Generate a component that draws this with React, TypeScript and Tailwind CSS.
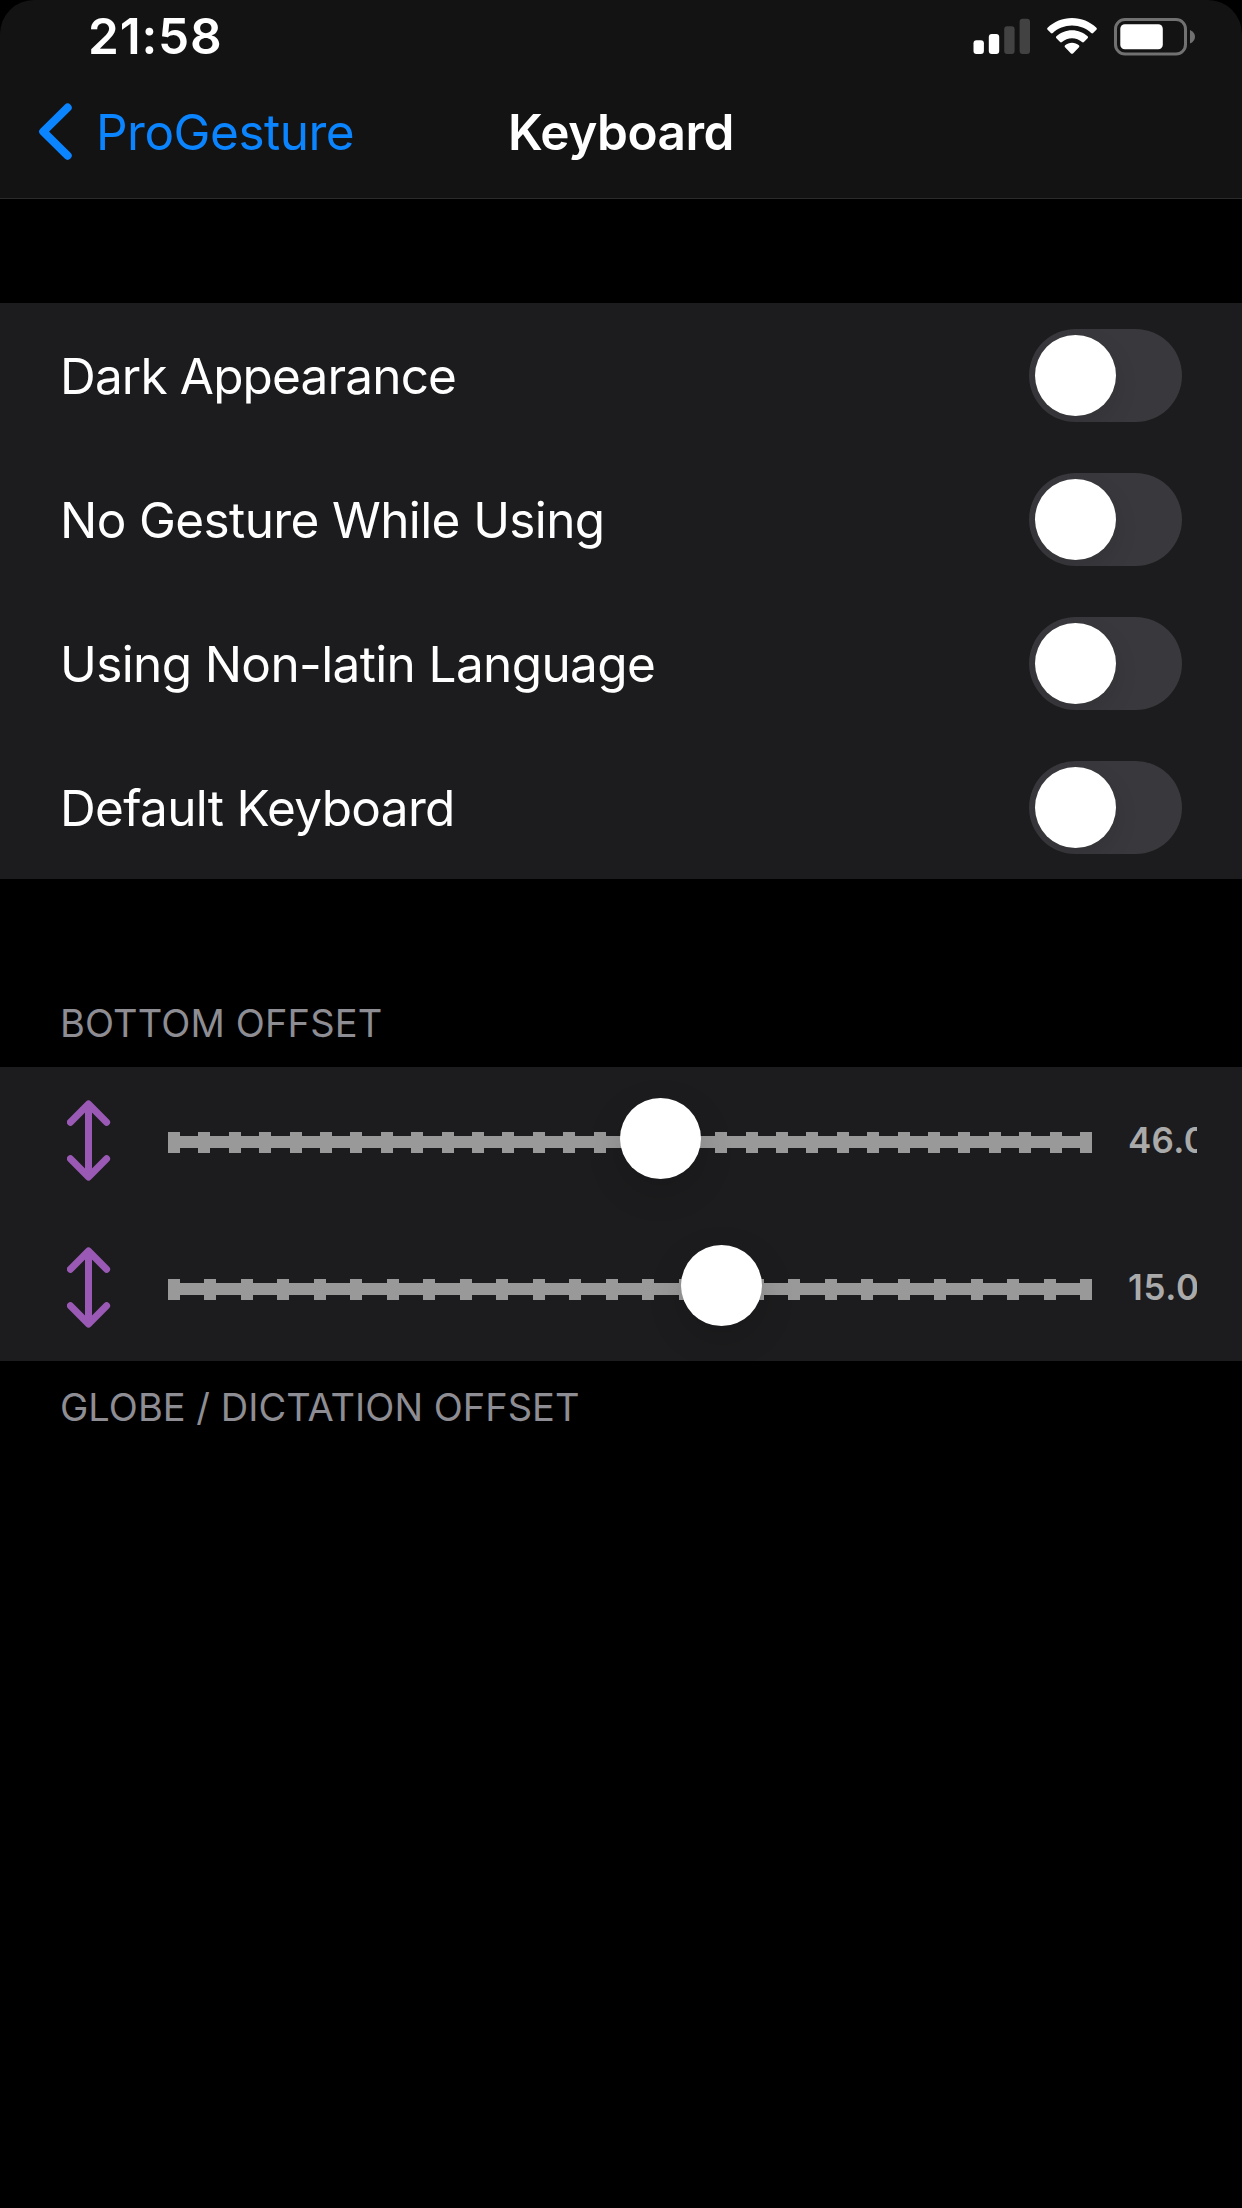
import { useState } from "react";

function SignalIcon() {
  return (
    <svg width="57" height="36" viewBox="0 0 57 36" className="block">
      <rect x="0.5" y="22.2" width="10.4" height="13.8" rx="3" fill="#fff" />
      <rect x="15.8" y="16" width="10.4" height="20" rx="3" fill="#fff" />
      <rect x="31.2" y="8.2" width="10.4" height="27.8" rx="3" fill="#424242" />
      <rect x="46.6" y="0.8" width="10.4" height="35.2" rx="3" fill="#424242" />
    </svg>
  );
}

function WifiIcon() {
  return (
    <svg width="50" height="36" viewBox="0 0 50 36" className="block" fill="#fff">
      <path d="M25 0C15.6 0 7 3.7.6 9.7c-.6.6-.6 1.4 0 2l3.3 3.4c.5.5 1.3.5 1.9 0C10.8 10.4 17.6 7.6 25 7.6s14.2 2.8 19.2 7.5c.6.5 1.4.5 1.9 0l3.3-3.4c.6-.6.6-1.4 0-2C43 3.7 34.4 0 25 0Z" />
      <path d="M25 12.2c-6 0-11.5 2.3-15.6 6.1-.6.6-.6 1.4 0 2l3.7 3.8c.5.5 1.3.5 1.9 0 2.7-2.4 6.2-3.8 10-3.8s7.3 1.4 10 3.8c.6.5 1.4.5 1.9 0l3.7-3.8c.6-.6.6-1.4 0-2C36.5 14.5 31 12.2 25 12.2Z" />
      <path d="M25 24.8c-2.6 0-5 .9-6.9 2.5-.6.5-.6 1.4-.1 2l6 6.1c.6.6 1.4.6 2 0l6-6.1c.5-.6.5-1.5-.1-2-1.9-1.6-4.3-2.5-6.9-2.5Z" />
    </svg>
  );
}

function BatteryIcon() {
  return (
    <svg width="82" height="38" viewBox="0 0 82 38" className="block">
      <rect x="1.5" y="1.5" width="70" height="34.5" rx="9.5" fill="none" stroke="#717171" strokeWidth="3" />
      <rect x="6.3" y="6.2" width="42.5" height="25" rx="4.5" fill="#fff" />
      <path d="M76 12c3 1.2 5 3.7 5 6.8s-2 5.6-5 6.8Z" fill="#717171" />
    </svg>
  );
}

function BackChevron() {
  return (
    <svg width="34" height="58" viewBox="0 0 34 58" className="block">
      <path
        d="M28.6 4.7 L4.3 28.6 L28.6 52.6"
        fill="none"
        stroke="#0a84ff"
        strokeWidth="8.2"
        strokeLinecap="round"
        strokeLinejoin="round"
      />
    </svg>
  );
}

function VerticalArrow() {
  return (
    <svg width="44" height="81" viewBox="0 0 44 81" className="block shrink-0">
      <path
        d="M3.4 22.2 L21.5 4 L39.6 22.2 M21.5 5 V76 M3.4 58.8 L21.5 77 L39.6 58.8"
        fill="none"
        stroke="#9b59b6"
        strokeWidth="7"
        strokeLinecap="round"
        strokeLinejoin="round"
      />
    </svg>
  );
}

function Toggle() {
  const [on, setOn] = useState(false);
  return (
    <button
      role="switch"
      aria-checked={on}
      onClick={() => setOn(!on)}
      className={
        on
          ? "mt-px flex h-[93px] w-[153px] items-center justify-end overflow-hidden rounded-full bg-[#30d158] p-[6px]"
          : "mt-px flex h-[93px] w-[153px] items-center overflow-hidden rounded-full bg-[#39393d] p-[6px]"
      }
    >
      <span className="size-[81px] rounded-full bg-white shadow-[0_9px_24px_rgba(0,0,0,0.1)]" />
    </button>
  );
}

const toggles = [
  { label: "Dark Appearance", style: "tracking-[-0.84px]" },
  { label: "No Gesture While Using", style: "tracking-[-0.62px]" },
  { label: "Using Non-latin Language", style: "tracking-[-0.63px]" },
  { label: "Default Keyboard", style: "tracking-[-0.69px]" },
];

const TRACK_WIDTH = 924;
const TICK_WIDTH = 12;

function StepSlider({ steps, knob }: { steps: number; knob: number }) {
  const gap = (TRACK_WIDTH - TICK_WIDTH) / steps;
  return (
    <div className="relative mt-1 ml-[57px] flex h-[21px] w-[924px] shrink-0 items-center">
      <div className="mb-px h-3 w-full bg-[#999999]" />
      {Array.from({ length: steps + 1 }, (_, i) => (
        <span
          key={i}
          className="absolute top-0 h-full w-3 bg-[#999999]"
          style={{ left: Math.round(i * gap) }}
        />
      ))}
      <span
        className="absolute top-[-34px] size-[81px] rounded-full bg-white shadow-[0_12px_36px_rgba(0,0,0,0.14)]"
        style={{ left: knob }}
      />
    </div>
  );
}

const sliders = [
  { steps: 30, knob: 452, value: "46.000", style: "tracking-[0.3px]" },
  { steps: 25, knob: 513, value: "15.000", style: "tracking-[0.6px]" },
];

export default function App() {
  return (
    <div className="flex h-[2208px] w-[1242px] flex-col bg-black font-[Inter,'Liberation_Sans',sans-serif] text-white">
      <header className="h-[199px] rounded-t-[34px] border-b border-[#2b2b2b] bg-[#131313]">
        <div className="flex h-[66px] items-start justify-between pl-[88px]">
          <span className="text-[49.5px] leading-[72px] font-semibold tracking-[0.83px]">21:58</span>
          <div className="flex items-start pt-[18px] pr-[46px]">
            <SignalIcon />
            <div className="ml-[17px]">
              <WifiIcon />
            </div>
            <div className="ml-[17px]">
              <BatteryIcon />
            </div>
          </div>
        </div>
        <div className="grid h-[132px] grid-cols-[1fr_auto_1fr] items-center text-[49.5px] leading-[60px]">
          <button className="flex items-center pl-[39px] text-[#0a84ff]">
            <BackChevron />
            <span className="ml-[23px] tracking-[-0.5px]">ProGesture</span>
          </button>
          <h1 className="font-semibold tracking-[-0.47px]">Keyboard</h1>
        </div>
      </header>

      <section className="mt-[104px] bg-[#1c1c1e]">
        {toggles.map((t) => (
          <div key={t.label} className="flex h-36 items-center justify-between px-[60px]">
            <span className={`pt-[2px] text-[49.5px] leading-[60px] ${t.style}`}>{t.label}</span>
            <Toggle />
          </div>
        ))}
      </section>

      <h2 className="mt-[120px] h-[68px] pl-[60px] text-[38px] leading-[48px] tracking-[0.15px] text-[#8d8d93]">
        BOTTOM OFFSET
      </h2>
      <section className="bg-[#1c1c1e]">
        {sliders.map((s) => (
          <div key={s.steps} className="flex h-[147px] items-center pl-[67px]">
            <VerticalArrow />
            <StepSlider steps={s.steps} knob={s.knob} />
            <div className="mb-[2px] ml-[36px] w-[69px] overflow-hidden">
              <span className={`block text-[35px] leading-[48px] font-semibold whitespace-nowrap text-[#aaaaaa] ${s.style}`}>
                {s.value}
              </span>
            </div>
          </div>
        ))}
      </section>
      <p className="mt-[22px] pl-[60px] text-[38px] leading-[48px] tracking-[0.02px] text-[#8d8d93]">
        GLOBE / DICTATION OFFSET
      </p>
    </div>
  );
}
